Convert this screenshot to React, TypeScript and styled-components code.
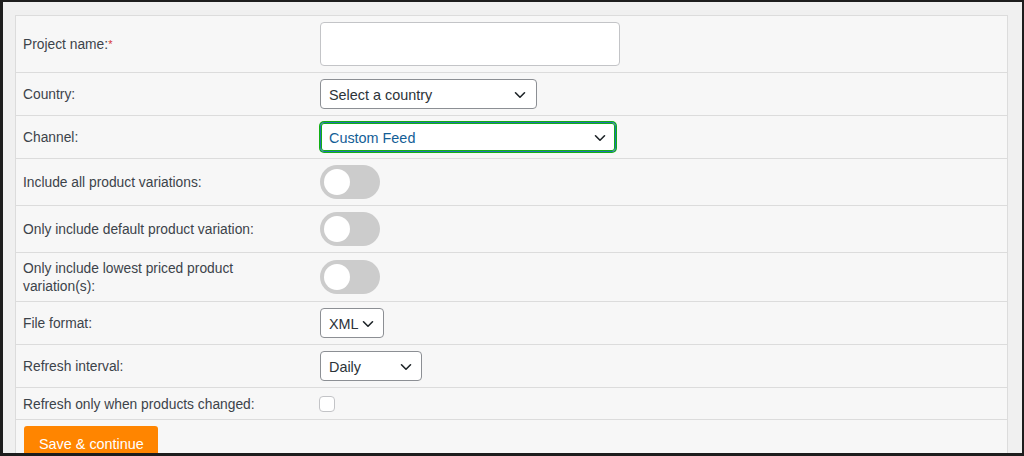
import styled, { createGlobalStyle } from "styled-components";

const GlobalStyle = createGlobalStyle`
  html, body {
    margin: 0;
    padding: 0;
    background: #f0f0f0;
  }
  * {
    box-sizing: border-box;
  }
`;

const Frame = styled.div`
  width: 1024px;
  height: 456px;
  overflow: hidden;
  border-style: solid;
  border-color: #1d1d1d;
  border-width: 2px 2px 3px 3px;
  background: #f0f0f0;
  padding: 13px 14px 0 12px;
  font-family: "Liberation Sans", Arial, sans-serif;
`;

const Table = styled.form`
  border: 1px solid #dcdcdc;
  border-bottom: none;
  background: #f7f7f7;
  margin: 0;
`;

const Row = styled.div<{ $h: number }>`
  display: grid;
  grid-template-columns: 304px 1fr;
  align-items: center;
  height: ${(p) => p.$h}px;
  border-bottom: 1px solid #dcdcdc;
`;

const Label = styled.label`
  padding: 2px 0 0 7px;
  max-width: 272px;
  font-size: 13.8px;
  line-height: 18px;
  color: #3c434a;
`;

const Required = styled.span`
  color: #d63638;
  font-size: 11px;
  vertical-align: top;
  position: relative;
  top: -1px;
`;

const Control = styled.div`
  display: flex;
  align-items: center;
`;

const TextInput = styled.input`
  width: 300px;
  height: 44px;
  border: 1px solid #c3c4c7;
  border-radius: 4px;
  background: #fff;
  outline: none;
`;

const SelectBox = styled.div<{ $w: number; $h: number; $focus?: boolean; $gap: number }>`
  display: flex;
  align-items: center;
  justify-content: space-between;
  width: ${(p) => p.$w}px;
  height: ${(p) => p.$h}px;
  padding: 1px ${(p) => p.$gap}px 0 8px;
  background: #fff;
  border: 1px solid ${(p) => (p.$focus ? "#2271b1" : "#8c8f94")};
  border-radius: 4px;
  box-shadow: ${(p) => (p.$focus ? "0 0 0 1px #13b013, inset 0 0 0 1px #13b013" : "none")};
  font-size: 14.4px;
  color: ${(p) => (p.$focus ? "#135e96" : "#2c3338")};
  cursor: pointer;
`;

const Toggle = styled.span`
  position: relative;
  display: inline-block;
  width: 60px;
  height: 34px;
  border-radius: 34px;
  background: #ccc;

  &::before {
    content: "";
    position: absolute;
    left: 4px;
    top: 4px;
    width: 26px;
    height: 26px;
    border-radius: 50%;
    background: #fff;
  }
`;

const Checkbox = styled.span`
  display: inline-block;
  width: 16px;
  height: 16px;
  margin-left: -1px;
  border: 1px solid #c3c4c7;
  border-radius: 4px;
  background: #fff;
`;

const Footer = styled.div`
  padding: 6px 0 0 8px;
`;

const SaveButton = styled.button`
  height: 36px;
  padding: 0 14px 0 15px;
  border: none;
  border-radius: 3px;
  background: #ff8500;
  color: #fff;
  font-family: "Liberation Sans", Arial, sans-serif;
  font-size: 14.4px;
  cursor: pointer;
`;

const Chevron = () => (
  <svg width="12" height="8" viewBox="0 0 12 8" fill="none">
    <path d="M1.5 1.8 6 6.2 10.5 1.8" stroke="#1d2327" strokeWidth="1.6" strokeLinecap="round" strokeLinejoin="round" />
  </svg>
);

const Select = ({ value, w, h, gap, focus }: { value: string; w: number; h: number; gap: number; focus?: boolean }) => (
  <SelectBox $w={w} $h={h} $gap={gap} $focus={focus}>
    <span>{value}</span>
    <Chevron />
  </SelectBox>
);

export default function App() {
  return (
    <>
      <GlobalStyle />
      <Frame>
        <Table>
          <Row $h={57}>
            <Label>
              Project name:<Required>*</Required>
            </Label>
            <Control>
              <TextInput type="text" />
            </Control>
          </Row>
          <Row $h={43}>
            <Label>Country:</Label>
            <Control>
              <Select value="Select a country" w={217} h={30} gap={10} />
            </Control>
          </Row>
          <Row $h={43}>
            <Label>Channel:</Label>
            <Control>
              <Select value="Custom Feed" w={296} h={30} gap={9} focus />
            </Control>
          </Row>
          <Row $h={47}>
            <Label>Include all product variations:</Label>
            <Control>
              <Toggle />
            </Control>
          </Row>
          <Row $h={47}>
            <Label>Only include default product variation:</Label>
            <Control>
              <Toggle />
            </Control>
          </Row>
          <Row $h={49}>
            <Label>Only include lowest priced product variation(s):</Label>
            <Control>
              <Toggle />
            </Control>
          </Row>
          <Row $h={43}>
            <Label>File format:</Label>
            <Control>
              <Select value="XML" w={64} h={30} gap={9} />
            </Control>
          </Row>
          <Row $h={43}>
            <Label>Refresh interval:</Label>
            <Control>
              <Select value="Daily" w={102} h={30} gap={9} />
            </Control>
          </Row>
          <Row $h={32}>
            <Label>Refresh only when products changed:</Label>
            <Control>
              <Checkbox />
            </Control>
          </Row>
          <Footer>
            <SaveButton type="button">Save &amp; continue</SaveButton>
          </Footer>
        </Table>
      </Frame>
    </>
  );
}
